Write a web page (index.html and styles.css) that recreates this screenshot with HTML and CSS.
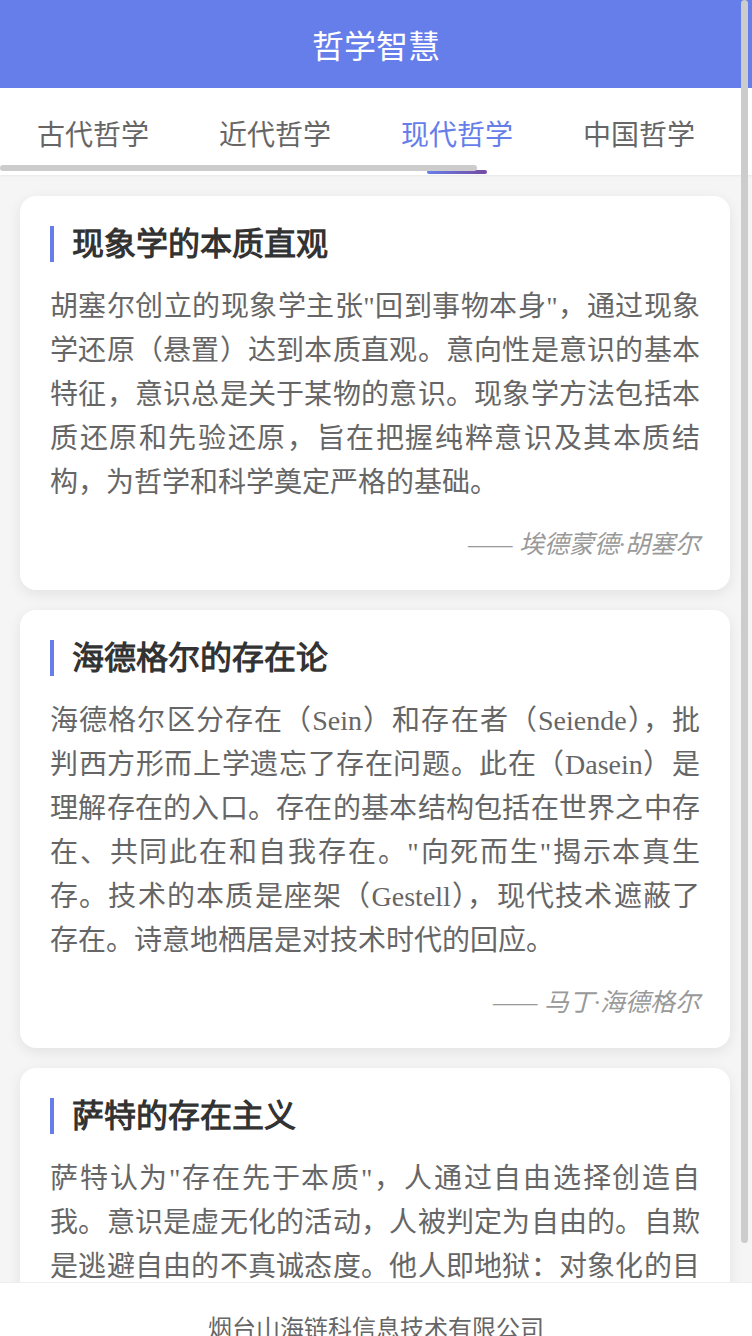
FILE: index.html
```html
<!DOCTYPE html>
<html lang="zh-CN">
<head>
  <meta charset="UTF-8" />
  <meta name="viewport" content="width=device-width, initial-scale=1.0"/>
  <title>哲学智慧</title>
  <link rel="stylesheet" href="styles.css">
</head>
<body>

  <div class="header">哲学智慧</div>

  <div class="tabs-bar">
    <div class="tabs">
      <div class="tab">古代哲学</div>
      <div class="tab">近代哲学</div>
      <div class="tab active">现代哲学</div>
      <div class="tab">中国哲学</div>
      <div class="tab">印度哲学</div>
      <div class="tab">伦理学</div>
      <div class="tab">美学</div>
    </div>
    <div class="h-thumb"></div>
  </div>

  <div class="content">
    <div class="card">
      <h3 class="card-title">现象学的本质直观</h3>
      <p class="card-text">胡塞尔创立的现象学主张"回到事物本身"，通过现象学还原（悬置）达到本质直观。意向性是意识的基本特征，意识总是关于某物的意识。现象学方法包括本质还原和先验还原，旨在把握纯粹意识及其本质结构，为哲学和科学奠定严格的基础。</p>
      <div class="card-author">—— 埃德蒙德·胡塞尔</div>
    </div>

    <div class="card">
      <h3 class="card-title">海德格尔的存在论</h3>
      <p class="card-text">海德格尔区分存在（Sein）和存在者（Seiende），批判西方形而上学遗忘了存在问题。此在（Dasein）是理解存在的入口。存在的基本结构包括在世界之中存在、共同此在和自我存在。"向死而生"揭示本真生存。技术的本质是座架（Gestell），现代技术遮蔽了存在。诗意地栖居是对技术时代的回应。</p>
      <div class="card-author">—— 马丁·海德格尔</div>
    </div>

    <div class="card">
      <h3 class="card-title">萨特的存在主义</h3>
      <p class="card-text">萨特认为"存在先于本质"，人通过自由选择创造自我。意识是虚无化的活动，人被判定为自由的。自欺是逃避自由的不真诚态度。他人即地狱：对象化的目光使我沦为客体。人必须为自己的选择承担全部责任。</p>
      <div class="card-author">—— 让-保罗·萨特</div>
    </div>
  </div>

  <div class="footer">烟台山海链科信息技术有限公司</div>

  <!-- page scrollbar thumb (overlay) -->
  <div class="v-thumb"></div>

</body>
</html>
```

FILE: styles.css
```css
* {
  margin: 0;
  padding: 0;
  box-sizing: border-box;
}

body {
  font-family: 'Liberation Serif', serif;
  background: #f5f5f5;
}

.header {
  height: 88px;
  background: #667eea;
  color: #fff;
  font-size: 32px;
  display: flex;
  justify-content: center;
  align-items: center;
}

.tabs-bar {
  position: relative;
  z-index: 1;
  background: #fff;
  box-shadow: 0 1px 2px rgba(0,0,0,0.06);
}

.tabs {
  display: flex;
  height: 87px;
  padding-left: 2px;
  overflow-x: auto;
  white-space: nowrap;
}

.tab {
  position: relative;
  flex-shrink: 0;
  padding: 2px 35px 0;
  font-size: 28px;
  color: #666;
  display: flex;
  align-items: center;
}

.tab.active {
  color: #667eea;
}

.tab.active::after {
  content: '';
  position: absolute;
  bottom: 1px;
  left: 50%;
  transform: translateX(-50%);
  width: 60px;
  height: 4px;
  border-radius: 2px;
  background: linear-gradient(90deg, #667eea, #764ba2);
}

.h-thumb {
  position: absolute;
  left: 0;
  bottom: 4px;
  width: 477px;
  height: 6px;
  border-radius: 3px;
  background: #ccc;
}

.v-thumb {
  position: fixed;
  top: 0;
  right: 4px;
  width: 7px;
  height: 1243px;
  border-radius: 4px;
  background: #ccc;
  z-index: 10;
}

.content {
  height: calc(100vh - 229px);
  overflow: hidden;
  padding: 21px 22px 0 20px;
}

.card {
  background: #fff;
  border-radius: 16px;
  padding: 30px;
  margin-bottom: 20px;
  box-shadow: 0 4px 14px rgba(0,0,0,0.08);
}

.card-title {
  font-size: 32px;
  font-weight: 600;
  color: #333;
  line-height: 36px;
  border-left: 4px solid #667eea;
  padding-left: 18px;
  margin-bottom: 23px;
}

.card-text {
  font-size: 28px;
  line-height: 44px;
  color: #666;
  text-align: justify;
}

.card-author {
  margin-top: 25px;
  text-align: right;
  font-size: 25px;
  line-height: 30px;
  font-style: italic;
  color: #999;
}

.footer {
  background: #fff;
  border-top: 1px solid #eee;
  padding: 26px 0 120px;
  text-align: center;
  font-size: 24px;
  color: #666;
}
```
